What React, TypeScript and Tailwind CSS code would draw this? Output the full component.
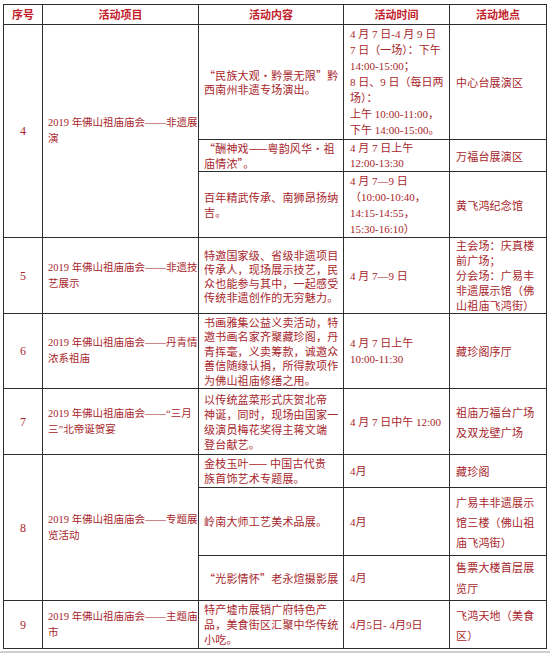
import React from 'react'

type Sub = {
  h: string
  content: string[]
  cLh: string
  time: string[]
  tLh: string
  loc: string[]
  lLh: string
}

type Row = {
  no: string
  project: string[]
  subs: Sub[]
}

const rows: Row[] = [
  {
    no: '4',
    project: ['2019 年佛山祖庙庙会——非遗展', '演'],
    subs: [
      {
        h: 'h-[115px]',
        content: ['“民族大观•黔景无限”黔', '西南州非遗专场演出。'],
        cLh: 'leading-[14px]',
        time: [
          '4 月 7 日-4 月 9 日',
          '7 日（一场）：下午',
          '14:00-15:00；',
          '8 日、9 日（每日两',
          '场）：',
          '上午 10:00-11:00，',
          '下午 14:00-15:00。'
        ],
        tLh: 'leading-[16px]',
        loc: ['中心台展演区'],
        lLh: 'leading-[16px]'
      },
      {
        h: 'h-[32px]',
        content: ['“酬神戏——粤韵风华•祖', '庙情浓”。'],
        cLh: 'leading-[15px]',
        time: ['4 月 7 日上午', '12:00-13:30'],
        tLh: 'leading-[15px]',
        loc: ['万福台展演区'],
        lLh: 'leading-[16px]'
      },
      {
        h: 'h-[66px]',
        content: ['百年精武传承、南狮昂扬纳', '吉。'],
        cLh: 'leading-[15px]',
        time: ['4 月 7—9 日', '（10:00-10:40，', '14:15-14:55，', '15:30-16:10）'],
        tLh: 'leading-[16px]',
        loc: ['黄飞鸿纪念馆'],
        lLh: 'leading-[16px]'
      }
    ]
  },
  {
    no: '5',
    project: ['2019 年佛山祖庙庙会——非遗技', '艺展示'],
    subs: [
      {
        h: 'h-[75px]',
        content: [
          '特邀国家级、省级非遗项目',
          '传承人，现场展示技艺，民',
          '众也能参与其中，一起感受',
          '传统非遗创作的无穷魅力。'
        ],
        cLh: 'leading-[14px]',
        time: ['4 月 7—9 日'],
        tLh: 'leading-[16px]',
        loc: ['主会场：庆真楼', '前广场；', '分会场：广易丰', '非遗展示馆（佛', '山祖庙飞鸿街）'],
        lLh: 'leading-[15px]'
      }
    ]
  },
  {
    no: '6',
    project: ['2019 年佛山祖庙庙会——丹青情', '浓系祖庙'],
    subs: [
      {
        h: 'h-[75px]',
        content: [
          '书画雅集公益义卖活动，特',
          '邀书画名家齐聚藏珍阁，丹',
          '青挥毫，义卖筹款，诚邀众',
          '善信随缘认捐，所得款项作',
          '为佛山祖庙修缮之用。'
        ],
        cLh: 'leading-[14.5px]',
        time: ['4 月 7 日上午', '10:00-11:30'],
        tLh: 'leading-[16px]',
        loc: ['藏珍阁序厅'],
        lLh: 'leading-[16px]'
      }
    ]
  },
  {
    no: '7',
    project: ['2019 年佛山祖庙庙会——“三月', '三”北帝诞贺宴'],
    subs: [
      {
        h: 'h-[66px]',
        content: [
          '以传统盆菜形式庆贺北帝',
          '神诞，同时，现场由国家一',
          '级演员梅花奖得主蒋文端',
          '登台献艺。'
        ],
        cLh: 'leading-[15px]',
        time: ['4 月 7 日中午 12:00'],
        tLh: 'leading-[16px]',
        loc: ['祖庙万福台广场', '及双龙壁广场'],
        lLh: 'leading-[20px]'
      }
    ]
  },
  {
    no: '8',
    project: ['2019 年佛山祖庙庙会——专题展', '览活动'],
    subs: [
      {
        h: 'h-[33px]',
        content: ['金枝玉叶—— 中国古代贵', '族首饰艺术专题展。'],
        cLh: 'leading-[15px]',
        time: ['4月'],
        tLh: 'leading-[16px]',
        loc: ['藏珍阁'],
        lLh: 'leading-[16px]'
      },
      {
        h: 'h-[68px]',
        content: ['岭南大师工艺美术品展。'],
        cLh: 'leading-[15px]',
        time: ['4月'],
        tLh: 'leading-[16px]',
        loc: ['广易丰非遗展示', '馆三楼（佛山祖', '庙飞鸿街）'],
        lLh: 'leading-[20px]'
      },
      {
        h: 'h-[45px]',
        content: ['“光影情怀”老永煊摄影展'],
        cLh: 'leading-[15px]',
        time: ['4月'],
        tLh: 'leading-[16px]',
        loc: ['售票大楼首层展', '览厅'],
        lLh: 'leading-[21px]'
      }
    ]
  },
  {
    no: '9',
    project: ['2019 年佛山祖庙庙会——主题庙', '市'],
    subs: [
      {
        h: 'h-[48px]',
        content: ['特产墟市展销广府特色产', '品，美食街区汇聚中华传统', '小吃。'],
        cLh: 'leading-[15px]',
        time: ['4月5日- 4月9日'],
        tLh: 'leading-[16px]',
        loc: ['飞鸿天地（美食', '区）'],
        lLh: 'leading-[20px]'
      }
    ]
  }
]

const cell = 'border border-[#2e2e2e] align-middle p-0'
const sans = "font-['Noto_Sans_CJK_SC',sans-serif]"
const serifCjk = "font-['Liberation_Serif','Noto_Sans_CJK_SC',serif]"

function Lines({ lines, className }: { lines: string[]; className: string }) {
  return (
    <div className={className}>
      {lines.map((l, i) => (
        <div key={i} className="whitespace-nowrap">
          {l}
        </div>
      ))}
    </div>
  )
}

export default function App() {
  return (
    <div className="w-[550px] h-[653px] bg-white flex flex-col overflow-hidden">
      <div className="pt-[4px] pl-[3px]">
        <table className="table-fixed border-collapse w-[543px] text-[#a8262b]">
          <colgroup>
            <col className="w-[39px]" />
            <col className="w-[156px]" />
            <col className="w-[145px]" />
            <col className="w-[106px]" />
            <col className="w-[97px]" />
          </colgroup>
          <thead>
            <tr className={`${sans} text-[11px] font-bold text-[#c2212a]`}>
              <th className={`${cell} h-[20px] text-center`}>序号</th>
              <th className={`${cell} text-center`}>活动项目</th>
              <th className={`${cell} text-center`}>活动内容</th>
              <th className={`${cell} text-center`}>活动时间</th>
              <th className={`${cell} text-center`}>活动地点</th>
            </tr>
          </thead>
          <tbody>
            {rows.map((row) =>
              row.subs.map((sub, si) => (
                <tr key={row.no + '-' + si}>
                  {si === 0 && (
                    <>
                      <td
                        rowSpan={row.subs.length}
                        className={`${cell} text-center font-['Liberation_Serif',serif] text-[12px]`}
                      >
                        {row.no}
                      </td>
                      <td rowSpan={row.subs.length} className={cell}>
                        <Lines
                          lines={row.project}
                          className={`${serifCjk} text-[10.5px] leading-[16px] pl-[5px]`}
                        />
                      </td>
                    </>
                  )}
                  <td className={`${cell} ${sub.h}`}>
                    <Lines
                      lines={sub.content}
                      className={`${sans} text-[11px] ${sub.cLh} tracking-[0.2px] pl-[5px]`}
                    />
                  </td>
                  <td className={cell}>
                    <Lines
                      lines={sub.time}
                      className={`${serifCjk} text-[11px] ${sub.tLh} pl-[6px]`}
                    />
                  </td>
                  <td className={cell}>
                    <Lines
                      lines={sub.loc}
                      className={`${sans} text-[11px] ${sub.lLh} tracking-[0.2px] pl-[6px]`}
                    />
                  </td>
                </tr>
              ))
            )}
          </tbody>
        </table>
      </div>
      <div className="flex-1" />
      <div className="h-[2px] bg-[#cfcfcf]" />
    </div>
  )
}
